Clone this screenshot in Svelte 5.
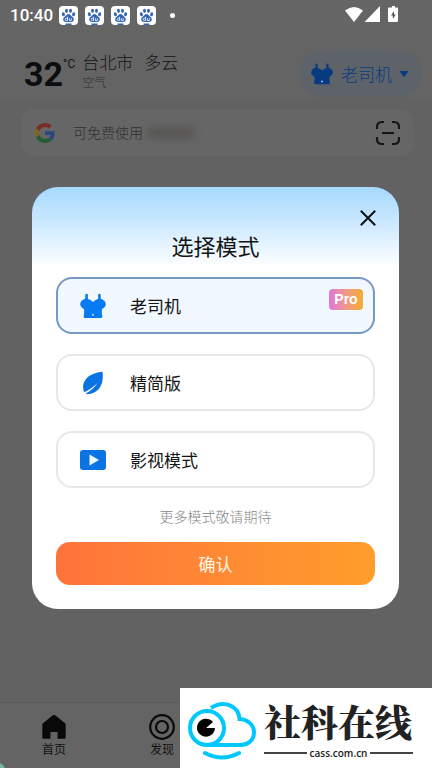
<script>
  let mode = $state('driver');
  const modes = [
    { id: 'driver', label: '老司机', pro: true },
    { id: 'lite', label: '精简版' },
    { id: 'video', label: '影视模式' }
  ];
</script>

{#snippet topIcon()}
  <svg class="top-icon" viewBox="0 0 26 26" aria-hidden="true">
    <path fill="currentColor" d="M5.300 1.600q1.300-1.800 2.600 0V6C10 6.600 11.500 7.600 13 9c1.500-1.400 3-2.400 5.100-3V1.600q1.300-1.800 2.600 0V5.700c2.500.6 4.600 2.400 5 4.700.4 2.600-1.200 4.500-3.700 5.500-.3 2.200-.2 4.600.3 7.100q.2 2-1 2H4.700q-1.200 0-1-2c.5-2.500.6-4.900.3-7.100C1.500 14.900-.1 13 .3 10.400c.4-2.300 2.500-4.100 5-4.700z"/>
    <circle cx="13" cy="21.800" r="1" fill="#bfe0ff"/>
  </svg>
{/snippet}

<div class="screen">
  <div class="status">
    <span class="clock">10:40</span>
    <div class="notices">
      {#each [1, 2, 3, 4] as n (n)}
        <svg width="19" height="19" viewBox="0 0 19 19" aria-hidden="true">
          <rect width="19" height="19" rx="4" fill="#fff"/>
          <g fill="#3667b4">
            <ellipse cx="4.400" cy="8.300" rx="1.500" ry="2" transform="rotate(-15 4.400 8.300)"/>
            <ellipse cx="7.500" cy="4.800" rx="1.500" ry="2.100"/>
            <ellipse cx="11.500" cy="4.800" rx="1.500" ry="2.100"/>
            <ellipse cx="14.600" cy="8.300" rx="1.500" ry="2" transform="rotate(15 14.600 8.300)"/>
            <path d="M9.500 8c1.800 0 2.300 1.500 3.500 2.600 1.400 1.200 2.200 2.200 1.700 3.700-.4 1.500-1.900 1.700-5.200 1.700s-4.800-.2-5.200-1.700c-.5-1.500.3-2.500 1.700-3.700C7.200 9.500 7.700 8 9.500 8z"/>
            <rect x="6.500" y="17.500" width="6" height="1.500"/>
          </g>
          <path d="M8.500 10.800v3.700H7.300a1.100 1.100 0 0 1 0-2.200h1M10.300 12.200v2.300h2v-2.300" fill="none" stroke="#fff" stroke-width=".8"/>
        </svg>
      {/each}
    </div>
    <i class="dot"></i>
    <svg class="signals" width="56" height="18" viewBox="0 0 56 18" fill="#fff" aria-hidden="true">
      <path d="M0 4.500Q9-2.500 18 4.500L9 16z"/>
      <path d="M35 0v16H19.500z"/>
      <path d="M45 1.500h2V0h3v1.500h2q1 0 1 1V15q0 1-1 1h-8q-1 0-1-1V2.500q0-1 1-1z"/>
      <path d="M49 5v3.500h1.800L47.800 13V9.500H46z" fill="#555"/>
    </svg>
  </div>

  <header>
    <span class="temp">32</span>
    <span class="unit">°C</span>
    <div class="weather">
      <div class="place"><span>台北市</span><span>多云</span></div>
      <small>空气</small>
    </div>
    <button class="switcher">
      {@render topIcon()}
      <span>老司机</span>
      <svg width="8" height="6" viewBox="0 0 8 6" aria-hidden="true"><path d="M.8 0h6.400q1.200.2.500 1.200L4.500 5.500q-.5.500-1 0L.3 1.200Q-.4.200.8 0z" fill="currentColor"/></svg>
    </button>
  </header>

  <div class="search">
    <svg width="20" height="20" viewBox="0 0 48 48" aria-hidden="true">
      <path fill="#7b2c26" d="M24 9.500c3.540 0 6.710 1.220 9.210 3.600l6.850-6.850C35.900 2.380 30.470 0 24 0 14.620 0 6.510 5.380 2.560 13.220l7.980 6.190C12.430 13.720 17.740 9.500 24 9.500z"/>
      <path fill="#28477e" d="M46.980 24.550c0-1.570-.15-3.090-.38-4.550H24v9.020h12.940c-.58 2.960-2.260 5.480-4.780 7.180l7.730 6c4.510-4.180 7.090-10.360 7.090-17.650z"/>
      <path fill="#80651a" d="M10.530 28.590A14.500 14.500 0 0 1 10.530 19.410L2.560 13.220a24 24 0 0 0 0 21.560z"/>
      <path fill="#225b34" d="M24 48c6.480 0 11.930-2.130 15.890-5.810l-7.730-6c-2.150 1.450-4.920 2.300-8.160 2.300-6.260 0-11.570-4.220-13.470-9.910l-7.980 6.190C6.510 42.620 14.620 48 24 48z"/>
    </svg>
    <input type="text" aria-label="搜索" placeholder="可免费使用" />
    <span class="haze"></span>
    <button class="scan" aria-label="扫一扫">
      <svg width="26" height="26" viewBox="0 0 26 26" fill="none" stroke="#151515" stroke-width="2.200" aria-hidden="true">
        <path d="M2 9V7q0-5 5-5h2M17 2h2q5 0 5 5v2M24 17v2q0 5-5 5h-2M9 24H7q-5 0-5-5v-2M7 13h12"/>
      </svg>
    </button>
  </div>

  <nav>
    <a href="#home">
      <svg width="24" height="26" viewBox="0 0 24 26" aria-hidden="true"><path d="M10.500 1.600q1.500-1.200 3 0L23 9.200q.7.600.7 1.500V23.500q0 1.200-1.200 1.200H15.500V18h-7v6.700H1.500Q.3 24.700.3 23.500V10.700q0-.9.700-1.500z" fill="#090909"/></svg>
      <span>首页</span>
    </a>
    <a href="#discover">
      <svg width="26" height="26" viewBox="0 0 26 26" fill="none" stroke="#090909" stroke-width="2.200" aria-hidden="true"><circle cx="13" cy="13" r="11.800"/><circle cx="13" cy="13" r="6"/></svg>
      <span>发现</span>
    </a>
  </nav>
  <i class="corner"></i>

  <div class="overlay">
    <form class="dialog" role="dialog" aria-labelledby="dialog-title">
      <button type="button" class="close" aria-label="关闭">
        <svg width="16" height="16" viewBox="0 0 16 16" fill="none" stroke="#0b0f16" stroke-width="2" aria-hidden="true"><path d="M.8.800l14.400 14.400M15.200.800L.8 15.200"/></svg>
      </button>
      <h1 id="dialog-title">选择模式</h1>
      <div class="options">
        {#each modes as m (m.id)}
          <label class="option" class:selected={mode === m.id}>
            <input type="radio" name="mode" value={m.id} bind:group={mode} />
            <span class="icon">
              {#if m.id === 'driver'}
                {@render topIcon()}
              {:else if m.id === 'lite'}
                <svg width="22" height="24" viewBox="0 0 22 24" aria-hidden="true">
                  <path fill="#0b74e5" d="M20.500.8c.5 5 .7 10.500-2.500 15.500-3 4.700-8 6.700-12.500 6.900l-1.800-.6C8.500 20 12.500 16.500 15.500 12 11.500 16 7 19 2.300 21.300.5 17.500.5 12.300 4 8 7.500 3.500 14 1.500 20.500.8z"/>
                </svg>
              {:else}
                <svg width="26" height="20" viewBox="0 0 26 20" aria-hidden="true"><rect width="26" height="20" rx="3" fill="#0b74e5"/><path d="M9.500 4.500v11l9.500-5.500z" fill="#e9fbff"/></svg>
              {/if}
            </span>
            <span>{m.label}</span>
            {#if m.pro}<b class="pro">Pro</b>{/if}
          </label>
        {/each}
      </div>
      <p>更多模式敬请期待</p>
      <button type="button" class="confirm">确认</button>
    </form>
  </div>

  <div class="brand">
    <svg width="70" height="60" viewBox="0 0 70 60" fill="none" stroke="#00c8ff" stroke-width="4" aria-hidden="true">
      <path d="M24 6C38-3 52 5 52.500 17 61 17.500 67 23 67 30.500 67 38 61 43 54 43H20"/>
      <circle cx="20" cy="26" r="17"/>
      <path d="M18 51q17 9 34 0" stroke-linecap="round"/>
      <path d="M19 26l7-6a9 9 0 1 0 2 6z" fill="#000" stroke="none"/>
    </svg>
    <div class="words">
      <strong>社科在线</strong>
      <div class="site"><span>cass.com.cn</span></div>
    </div>
  </div>
</div>

<style>
  :global(body) { margin: 0; background: #646464; }
  .screen {
    position: relative;
    overflow: hidden;
    min-height: 100vh;
    display: flex;
    flex-direction: column;
    background: #626262;
    color: #141414;
    font-family: Roboto, "Noto Sans CJK SC", sans-serif;
  }
  button { border: 0; padding: 0; background: none; font: inherit; color: inherit; }
  svg { display: block; flex: none; }

  .status { display: flex; align-items: center; height: 30px; padding: 0 31px 0 10px; background: #656565; }
  .clock { color: #fff; font-size: 17px; font-weight: 500; }
  .notices { display: flex; gap: 7px; margin-left: 6px; }
  .dot { width: 5px; height: 5px; margin-left: 14px; border-radius: 50%; background: #fff; }
  .signals { margin-left: auto; }

  header { display: flex; align-items: flex-start; padding: 20px 10px 0 24px; background: #646464; }
  .temp { font-size: 34px; line-height: 48px; font-weight: 700; color: #0d0d0d; }
  .unit { font-size: 12px; line-height: 14px; padding-top: 7px; }
  .weather { margin-left: 7px; }
  .place { display: flex; gap: 11px; font-size: 17px; line-height: 26px; font-weight: 300; }
  small { display: block; font-size: 12px; line-height: 14px; color: #303030; font-weight: 300; }
  .switcher {
    display: flex; align-items: center; gap: 8px;
    height: 47px; margin-left: auto; padding: 0 14px 0 12px;
    border-radius: 24px; background: #5e6269; color: #073b80;
    font-size: 17px; font-weight: 300;
  }
  .top-icon { width: 26px; height: 26px; }
  .switcher .top-icon { width: 22px; height: 22px; }

  .search {
    display: flex; align-items: center; height: 47px;
    margin: 11px 18px 0 21px; padding: 0 13px 0 14px;
    border-radius: 14px; background: #666;
  }
  .search input {
    width: 74px; margin-left: 18px; padding: 0; border: 0; outline: 0; background: none;
    font: inherit; font-size: 14px; font-weight: 300; color: #333;
  }
  .search input::placeholder { color: #303030; opacity: 1; }
  .haze { width: 48px; height: 10px; border-radius: 5px; background: #555451; filter: blur(4px); }
  .scan { margin-left: auto; }

  nav { display: flex; height: 65px; margin-top: auto; background: #646464; border-top: 1px solid #5c5c5c; }
  nav a {
    width: 25%; display: flex; flex-direction: column; align-items: center;
    padding-top: 11px; gap: 1px; color: #121212; text-decoration: none;
    font-size: 12px; line-height: 18px;
  }
  .corner { position: absolute; left: -9px; bottom: -9px; width: 14px; height: 14px; border-radius: 50%; background: #72b5a4; }

  .overlay {
    position: absolute; inset: 0; padding: 28px 33px 0 32px;
    display: flex; align-items: center; justify-content: center;
  }
  .dialog {
    position: relative; box-sizing: border-box; width: 100%; padding: 45px 24px 24px;
    border-radius: 26px; background: linear-gradient(#a6d9ff 0, #c5e6ff 30px, #fff 80px); color: #141414;
    box-shadow: 0 0 1px #55768d;
  }
  .close { position: absolute; top: 23px; right: 23px; }
  h1 { margin: 0 0 13px; text-align: center; font-size: 22px; line-height: 32px; font-weight: 400; }
  .options { display: flex; flex-direction: column; gap: 20px; }
  .option {
    position: relative; display: flex; align-items: center; box-sizing: border-box; height: 57px;
    padding-left: 22px; border: 2px solid #e7e7e7; border-radius: 16px; background: #fff;
    font-size: 17px;
  }
  .option input { position: absolute; opacity: 0; margin: 0; }
  .option.selected { border-color: #7898c5; background: #f2f8ff; }
  .icon { width: 26px; margin-right: 24px; display: flex; justify-content: center; color: #087bf2; }
  .pro {
    position: absolute; top: 10px; right: 10px; width: 34px; border-radius: 4px; text-align: center;
    background: linear-gradient(90deg, #dd78dc, #f29a80 55%, #f3ae2d); color: #fff;
    font-family: "Liberation Sans", sans-serif; font-size: 14px; line-height: 21px;
  }
  p { margin: 18px 0 14px; text-align: center; font-size: 14px; line-height: 22px; font-weight: 300; color: #888; }
  .confirm {
    display: block; width: 100%; height: 43px; border-radius: 14px;
    background: linear-gradient(90deg, #ff733b, #ff9e2c); color: #fff7e8; font-size: 17px;
  }

  .brand {
    position: absolute; right: 0; bottom: 0; box-sizing: border-box; width: 252px; height: 80px;
    display: flex; align-items: center; padding: 0 19px 0 7px; gap: 7px; background: #fff;
  }
  .brand svg { margin-top: 8px; }
  .words { flex: 1; color: #222; }
  strong { display: block; font-family: "Noto Serif CJK SC", "Noto Sans CJK SC", sans-serif; font-size: 37px; line-height: 50px; font-weight: 900; white-space: nowrap; }
  .site { display: flex; align-items: center; gap: 3px; font-family: "Open Sans", sans-serif; font-size: 10px; line-height: 14px; font-weight: 600; }
  .site::before, .site::after { content: ""; flex: 1; height: 2px; background: #444; }
</style>
